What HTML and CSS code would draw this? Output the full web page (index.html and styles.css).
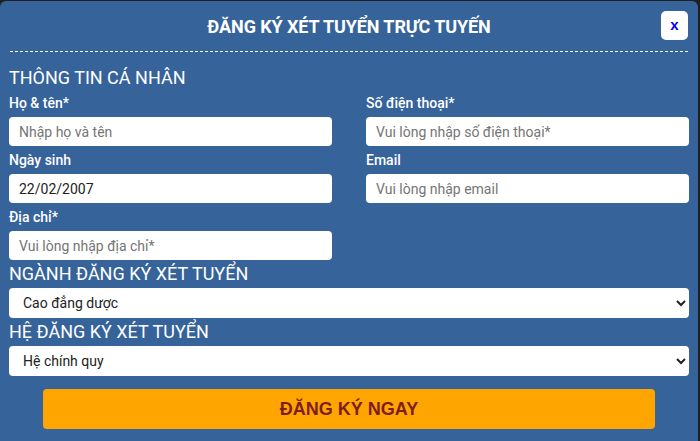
FILE: index.html
```html
<!DOCTYPE html>
<html lang="vi">
<head>
<meta charset="utf-8">
<title>Đăng ký xét tuyển</title>
<link rel="stylesheet" href="styles.css">
</head>
<body>
<div class="modal">
  <div class="modal-header">
    <span></span>
    <h2 class="modal-title">ĐĂNG KÝ XÉT TUYỂN TRỰC TUYẾN</h2>
    <button class="close-btn" type="button">x</button>
  </div>
  <form class="modal-body">
    <h3 class="section-title">THÔNG TIN CÁ NHÂN</h3>
    <div class="grid">
      <div class="field">
        <label class="label">Họ &amp; tên*</label>
        <input class="input" type="text" placeholder="Nhập họ và tên">
      </div>
      <div class="field">
        <label class="label">Số điện thoại*</label>
        <input class="input" type="text" placeholder="Vui lòng nhập số điện thoại*">
      </div>
      <div class="field">
        <label class="label">Ngày sinh</label>
        <input class="input" type="text" value="22/02/2007">
      </div>
      <div class="field">
        <label class="label">Email</label>
        <input class="input" type="text" placeholder="Vui lòng nhập email">
      </div>
      <div class="field">
        <label class="label">Địa chỉ*</label>
        <input class="input" type="text" placeholder="Vui lòng nhập địa chỉ*">
      </div>
    </div>
    <h3 class="section-title">NGÀNH ĐĂNG KÝ XÉT TUYỂN</h3>
    <select class="select">
      <option>Cao đẳng dược</option>
    </select>
    <h3 class="section-title">HỆ ĐĂNG KÝ XÉT TUYỂN</h3>
    <select class="select">
      <option>Hệ chính quy</option>
    </select>
    <button class="submit-btn" type="button">ĐĂNG KÝ NGAY</button>
  </form>
</div>
</body>
</html>
```

FILE: styles.css
```css
* { box-sizing: border-box; }
html, body {
  margin: 0;
  padding: 0;
  background: #202020;
  font-family: Roboto, "Liberation Sans", Arial, sans-serif;
}
.modal {
  margin-top: 1px;
  width: 698px;
  height: 460px;
  background: #35639a;
  border-radius: 6px 6px 0 0;
}
.modal-header {
  display: grid;
  grid-template-columns: 1fr auto 1fr;
  align-items: center;
  margin: 0 10px;
  padding: 10px 0 11px;
  border-bottom: 1px dashed #ffffff;
}
.modal-title {
  margin: 0;
  color: #ffffff;
  font-size: 18px;
  font-weight: 700;
  line-height: 27px;
  padding-top: 2px;
  letter-spacing: -0.1px;
}
.close-btn {
  justify-self: end;
  width: 27px;
  height: 29px;
  border: none;
  border-radius: 5px;
  background: #ffffff;
  color: #0000ff;
  font-family: "Liberation Sans", Arial, sans-serif;
  font-weight: 700;
  font-size: 15px;
  padding: 0 0 2px;
}
.modal-body {
  padding: 12px 9px 0;
  display: flex;
  flex-direction: column;
}
.section-title {
  margin: 2px 0 0;
  color: #ffffff;
  font-size: 18px;
  font-weight: 400;
  line-height: 24px;
}
.grid {
  display: grid;
  grid-template-columns: 1fr 1fr;
  column-gap: 34px;
  row-gap: 4px;
  margin-top: 3px;
}
.field {
  display: flex;
  flex-direction: column;
}
.label {
  color: #ffffff;
  font-size: 14px;
  font-weight: 500;
  line-height: 20px;
  margin-bottom: 4px;
}
.input {
  height: 29px;
  border: none;
  border-radius: 4px;
  background: #ffffff;
  padding: 0 10px;
  font-family: Roboto, "Liberation Sans", Arial, sans-serif;
  font-size: 14px;
  color: #222222;
  outline: none;
}
.input::placeholder { color: #757575; }
.select {
  height: 30px;
  border: none;
  border-radius: 4px;
  background-color: #ffffff;
  padding: 0 8px 0 10px;
  margin: 2px 0 0;
  font-family: Roboto, "Liberation Sans", Arial, sans-serif;
  font-size: 14px;
  color: #222222;
}
.submit-btn {
  margin: 13px 34px 0;
  height: 40px;
  border: none;
  border-radius: 4px;
  background: #ffa500;
  color: #7e1d1d;
  font-family: "Liberation Sans", Arial, sans-serif;
  font-size: 18px;
  font-weight: 700;
}
```
